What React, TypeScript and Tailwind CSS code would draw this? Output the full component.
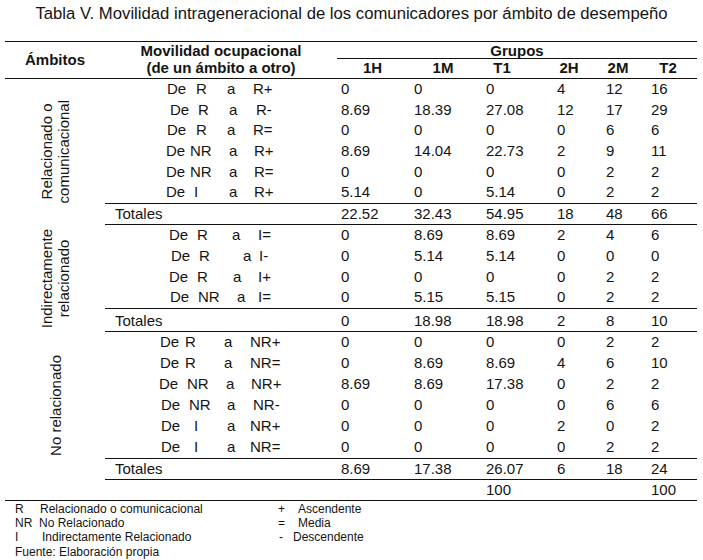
import React from 'react'

type Row = {
  from: string
  to: string
  // x of "De", origin, "a" and destination, measured from the start of the column
  p: [number, number, number, number]
  v: string[]
}

type Section = {
  label: string[]
  rowClass: string
  totalClass: string
  rows: Row[]
  totals: string[]
}

const COLS = [
  { cell: 'w-[71px] pl-[4px]', head: 'w-[71px] justify-center' },
  { cell: 'w-[70px] pl-[6px]', head: 'w-[70px] justify-center' },
  { cell: 'w-[70px] pl-[8px]', head: 'w-[70px] justify-center pr-[22px]' },
  { cell: 'w-[47px] pl-[9px]', head: 'w-[47px] justify-center pr-[5px]' },
  { cell: 'w-[49px] pl-[11px]', head: 'w-[49px] justify-center pr-[3px]' },
  { cell: 'w-[53px] pl-[7px]', head: 'w-[53px] justify-center pr-[5px]' },
]

const HEADS = ['1H', '1M', 'T1', '2H', '2M', 'T2']

const SECTIONS: Section[] = [
  {
    label: ['Relacionado o', 'comunicacional'],
    rowClass: 'h-[20.67px]',
    totalClass: 'h-[22px]',
    rows: [
      { from: 'R', to: 'R+', p: [62, 91, 122, 148], v: ['0', '0', '0', '4', '12', '16'] },
      { from: 'R', to: 'R-', p: [65, 93, 124, 151], v: ['8.69', '18.39', '27.08', '12', '17', '29'] },
      { from: 'R', to: 'R=', p: [62, 91, 122, 148], v: ['0', '0', '0', '0', '6', '6'] },
      { from: 'NR', to: 'R+', p: [61, 85, 124, 149], v: ['8.69', '14.04', '22.73', '2', '9', '11'] },
      { from: 'NR', to: 'R=', p: [61, 85, 124, 149], v: ['0', '0', '0', '0', '2', '2'] },
      { from: 'I', to: 'R+', p: [61, 89, 124, 149], v: ['5.14', '0', '5.14', '0', '2', '2'] },
    ],
    totals: ['22.52', '32.43', '54.95', '18', '48', '66'],
  },
  {
    label: ['Indirectamente', 'relacionado'],
    rowClass: 'h-[20.75px]',
    totalClass: 'h-[24px] pt-[3px]',
    rows: [
      { from: 'R', to: 'I=', p: [64, 92, 127, 153], v: ['0', '8.69', '8.69', '2', '4', '6'] },
      { from: 'R', to: 'I-', p: [66, 94, 138, 154], v: ['0', '5.14', '5.14', '0', '0', '0'] },
      { from: 'R', to: 'I+', p: [64, 92, 128, 153], v: ['0', '0', '0', '0', '2', '2'] },
      { from: 'NR', to: 'I=', p: [65, 93, 132, 153], v: ['0', '5.15', '5.15', '0', '2', '2'] },
    ],
    totals: ['0', '18.98', '18.98', '2', '8', '10'],
  },
  {
    label: ['No relacionado'],
    rowClass: 'h-[21px]',
    totalClass: 'h-[22px]',
    rows: [
      { from: 'R', to: 'NR+', p: [55, 80, 119, 145], v: ['0', '0', '0', '0', '2', '2'] },
      { from: 'R', to: 'NR=', p: [55, 80, 119, 145], v: ['0', '8.69', '8.69', '4', '6', '10'] },
      { from: 'NR', to: 'NR+', p: [54, 82, 121, 146], v: ['8.69', '8.69', '17.38', '0', '2', '2'] },
      { from: 'NR', to: 'NR-', p: [56, 84, 122, 148], v: ['0', '0', '0', '0', '6', '6'] },
      { from: 'I', to: 'NR+', p: [56, 89, 122, 145], v: ['0', '0', '0', '2', '0', '2'] },
      { from: 'I', to: 'NR=', p: [56, 89, 122, 145], v: ['0', '0', '0', '0', '2', '2'] },
    ],
    totals: ['8.69', '17.38', '26.07', '6', '18', '24'],
  },
]

function Values({ v }: { v: string[] }) {
  return (
    <>
      {v.map((x, i) => (
        <div key={i} className={`flex items-center ${COLS[i].cell}`}>
          {x}
        </div>
      ))}
    </>
  )
}

function Mov({ row }: { row: Row }) {
  const [de, from, a, to] = row.p
  return (
    <div className="flex w-[232px] items-center" style={{ paddingLeft: de }}>
      <span style={{ width: from - de }}>De</span>
      <span style={{ width: a - from }}>{row.from}</span>
      <span style={{ width: to - a }}>a</span>
      <span>{row.to}</span>
    </div>
  )
}

function Block({ section }: { section: Section }) {
  return (
    <div className="flex">
      <div className="flex w-[100px] items-center justify-center">
        <div className="rotate-180 text-center leading-[17px] [writing-mode:vertical-rl]">
          {section.label.map((l) => (
            <div key={l}>{l}</div>
          ))}
        </div>
      </div>
      <div className="w-[592px]">
        {section.rows.map((row, i) => (
          <div key={i} className={`flex ${section.rowClass}`}>
            <Mov row={row} />
            <Values v={row.v} />
          </div>
        ))}
        <div className={`flex border-y border-[#111] ${section.totalClass}`}>
          <div className="flex w-[232px] items-center pl-[10px]">Totales</div>
          <Values v={section.totals} />
        </div>
      </div>
    </div>
  )
}

export default function App() {
  return (
    <div className="h-[560px] w-[703px] overflow-hidden bg-white font-['Liberation_Sans',Arial,sans-serif] text-[15px] text-[#141414]">
      <h1 className="h-[28px] text-center text-[16.7px] leading-[28px]">
        Tabla V. Movilidad intrageneracional de los comunicadores por ámbito de desempeño
      </h1>

      <div className="mt-[13px] ml-[5px] w-[692px] border-t border-[#111]">
        <div className="flex h-[37px] border-b border-[#111] font-bold">
          <div className="flex w-[100px] items-center justify-center">Ámbitos</div>
          <div className="flex w-[232px] flex-col items-center leading-[17px]">
            <span>Movilidad ocupacional</span>
            <span>(de un ámbito a otro)</span>
          </div>
          <div className="w-[360px]">
            <div className="flex h-[17px] items-center justify-center border-b border-[#111] leading-[17px]">Grupos</div>
            <div className="flex h-[19px]">
              {HEADS.map((h, i) => (
                <div key={h} className={`flex items-center ${COLS[i].head}`}>
                  {h}
                </div>
              ))}
            </div>
          </div>
        </div>

        {SECTIONS.map((s) => (
          <Block key={s.label[0]} section={s} />
        ))}

        <div className="flex h-[21px] border-b border-[#111]">
          <div className="w-[332px]" />
          <Values v={['', '', '100', '', '', '100']} />
        </div>
      </div>

      <div className="grid grid-cols-[263px_1fr] pt-px pl-[15px] text-[12px] leading-[14px]">
        <div className="flex">
          <span className="w-[25px]">R</span>
          <span>Relacionado o comunicacional</span>
        </div>
        <div className="flex">
          <span className="w-[20px]">+</span>
          <span>Ascendente</span>
        </div>
        <div className="flex">
          <span className="w-[24px]">NR</span>
          <span>No Relacionado</span>
        </div>
        <div className="flex">
          <span className="w-[20px]">=</span>
          <span>Media</span>
        </div>
        <div className="flex">
          <span className="w-[27px]">I</span>
          <span>Indirectamente Relacionado</span>
        </div>
        <div className="flex pl-px">
          <span className="w-[14px]">-</span>
          <span>Descendente</span>
        </div>
        <div className="col-span-2 pt-px">Fuente: Elaboración propia</div>
      </div>
    </div>
  )
}
